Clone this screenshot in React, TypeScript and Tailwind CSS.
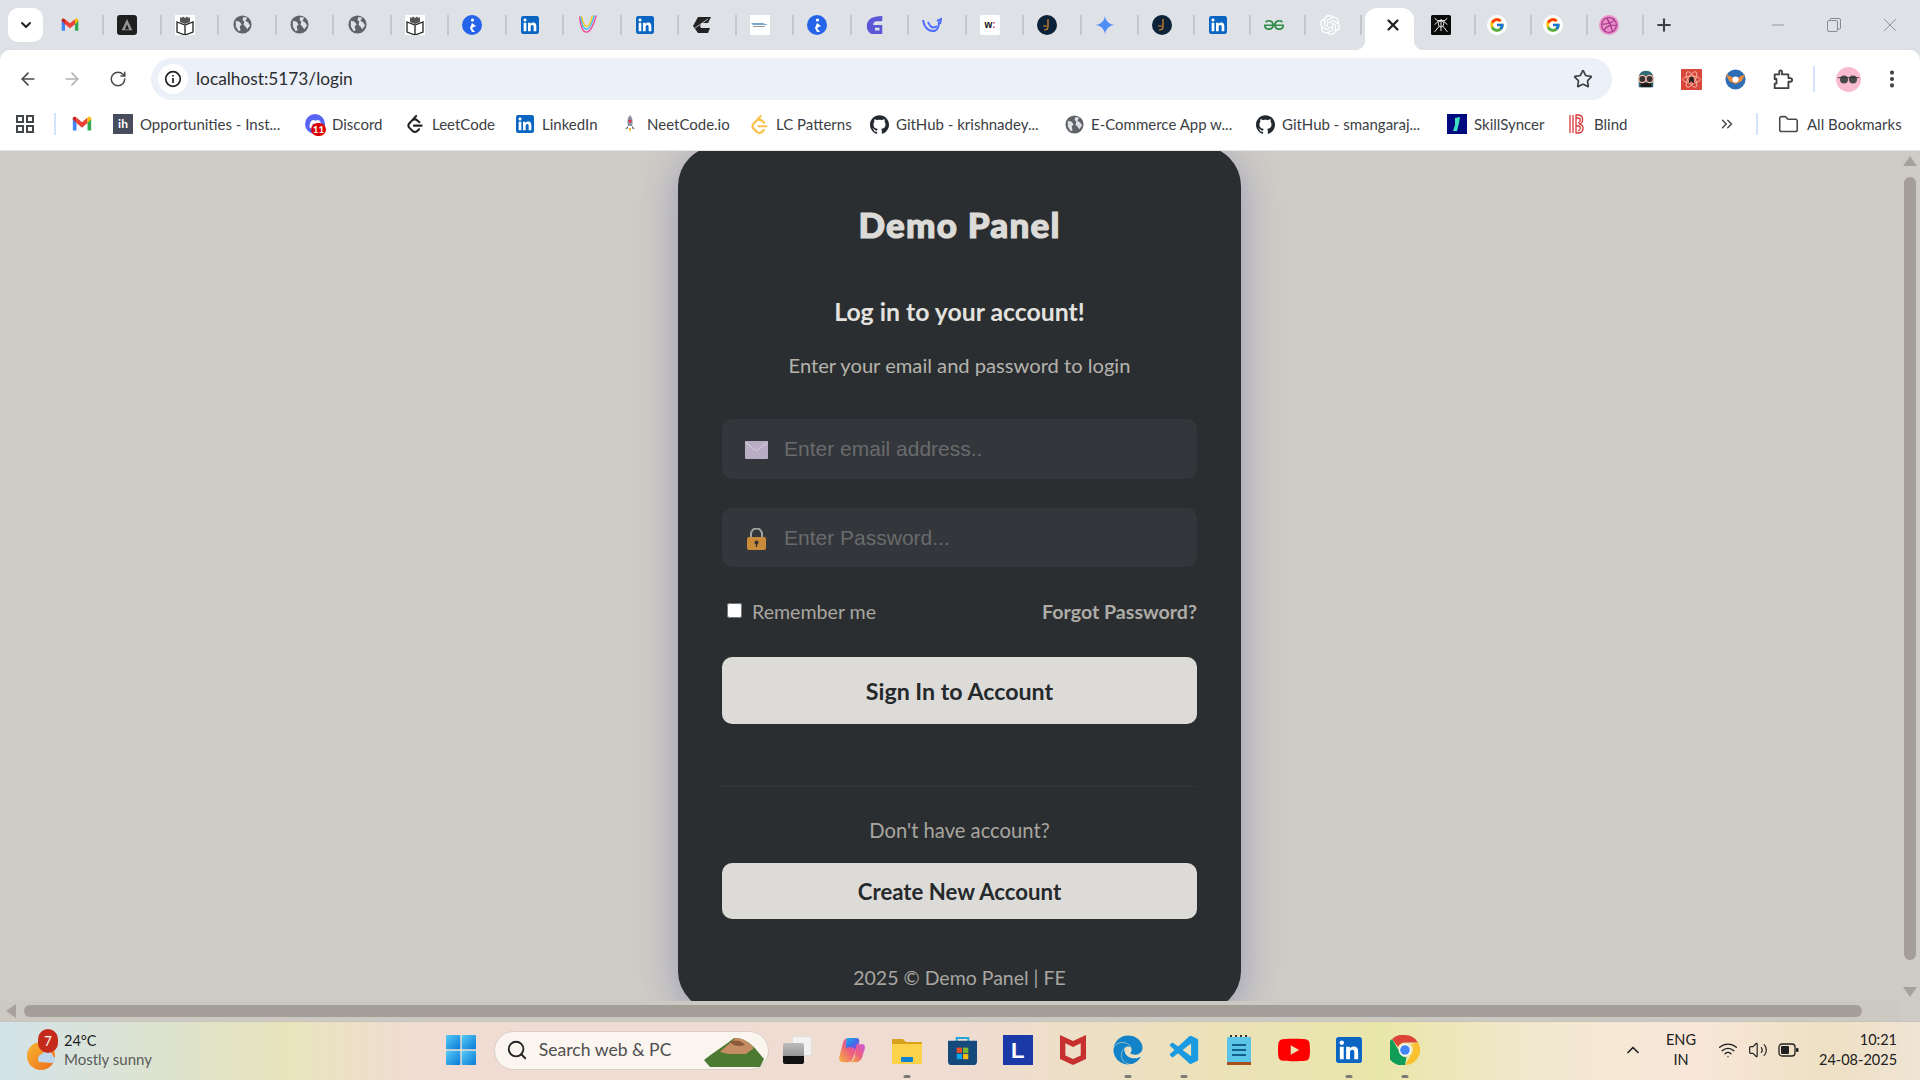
import React from "react";
import { ArrowLeft, ArrowRight, RotateCw, Star, ChevronDown, X, Plus, Minus, ChevronsRight, Folder, EllipsisVertical, Search, ChevronUp, Wifi, Volume2 } from "lucide-react";
import { SiLinkedin, SiOpenai, SiGithub, SiLeetcode, SiGeeksforgeeks, SiGooglegemini, SiMcafee, SiYoutube, SiDribbble } from "react-icons/si";
import { FcGoogle } from "react-icons/fc";
import { BiLogoVisualStudio } from "react-icons/bi";
import { FaEdge, FaDiscord } from "react-icons/fa";

const ui = "font-['Lato','Noto_Sans',sans-serif]";

const Gmail = ({ s = 20 }: { s?: number }) => (
  <svg width={s} height={s} viewBox="0 0 24 24">
    <path d="M2 6v13h4V10z" fill="#4285f4" />
    <path d="M22 6v13h-4V10z" fill="#34a853" />
    <path d="M6 11V5l6 5 6-5v6l-6 5z" fill="#ea4335" />
    <path d="M2 6c0-2 2.500-2.500 4-1v6L2 7z" fill="#c5221f" />
    <path d="M22 6c0-2-2.500-2.500-4-1v6l4-4z" fill="#fbbc04" />
  </svg>
);
const Globe = () => (
  <svg width="19" height="19" viewBox="0 0 20 20">
    <circle cx="10" cy="10" r="9.500" fill="#5f6368" />
    <path d="M3 6l4 1 2 3-2 2 1 4-2 1-3-5zM11 2l4 1-2 3 3 2 2 3-3 4-2-3-2-2 1-3-2-2z" fill="#dee1e6" />
  </svg>
);
const Book = () => (
  <svg width="20" height="20" viewBox="0 0 20 20">
    <rect width="20" height="20" fill="#fff" />
    <path d="M2 7l8 3 8-3v10l-8 3-8-3zM10 10v10" fill="#fff" stroke="#222" strokeWidth="1.300" />
    <path d="M5 7V2l1.500 1L8 1.500 10 3l2-1.500L13.500 3 15 2v5l-5 2z" fill="#555" />
  </svg>
);
const Kite = () => (
  <svg width="20" height="20" viewBox="0 0 20 20">
    <circle cx="10" cy="10" r="10" fill="#2563eb" />
    <circle cx="10.500" cy="5" r="1.600" fill="#fff" />
    <path d="M10 8l4 3-4 2 3 4h-3l-2-4z" fill="#fff" />
  </svg>
);
const Li = ({ s = 18 }: { s?: number }) => <SiLinkedin size={s} color="#0a66c2" className="bg-white rounded-[2px]" />;
const Arc = () => (
  <svg width="21" height="21" viewBox="0 0 22 22" fill="none" strokeWidth="1.500" strokeLinecap="round">
    <path d="M3 3c0 9 3 16 7 16 4 0 8-9 10-17" stroke="#ec4899" />
    <path d="M4 3c1 8 3 13 6 13 3 0 6-7 8-14" stroke="#38bdf8" />
    <path d="M5 3c1 6 3 10 5 10 3 0 5-6 6-11" stroke="#facc15" />
  </svg>
);
const Cummins = () => (
  <svg width="20" height="20" viewBox="0 0 20 20">
    <path d="M6 2h13l-3 6h-6l-2 3 1 2h9l-2 5H6L1 11z" fill="#222" />
    <path d="M3 13L16 4" stroke="#dee1e6" strokeWidth="0.800" />
  </svg>
);
const Thumb = () => (
  <svg width="20" height="20" viewBox="0 0 20 20">
    <rect width="20" height="20" fill="#fff" />
    <path d="M1 8h12l5 2H3z" fill="#7aa6c9" />
    <path d="M3 11h12v1H3z" fill="#999" />
  </svg>
);
const Purple = () => (
  <svg width="20" height="20" viewBox="0 0 20 22">
    <path d="M1 12C1 5 7 1 18 1v6h-6c-3 0-4 2-4 4h10v10H8c-4 0-7-4-7-9z" fill="#5b57d6" />
    <rect x="10" y="14" width="5" height="3" fill="#dee1e6" />
  </svg>
);
const Whale = () => (
  <svg width="20" height="18" viewBox="0 0 20 18" fill="none" stroke="#4d6bfe" strokeWidth="2">
    <path d="M1 4c1 7 5 11 10 11 4 0 6-4 6-9" />
    <path d="M6 6c2 5 5 7 9 4M15 5l4-2-1 5" />
  </svg>
);
const W = () => (
  <div className="w-5 h-5 bg-white rounded-[2px] flex items-center justify-center text-[10px] font-bold font-['Liberation_Sans',sans-serif] text-[#111]">
    w<span className="text-[#e11d48]">:</span>
  </div>
);
const Dark = () => (
  <svg width="20" height="20" viewBox="0 0 20 20">
    <circle cx="10" cy="10" r="10" fill="#0b2239" />
    <path d="M11 4v8c0 2-2 3-4 3M6 11h4" stroke="#e08a2c" strokeWidth="1.200" fill="none" />
  </svg>
);
const Triangle = () => (
  <div className="w-5 h-5 rounded-[3px] bg-[#1f1f1f] flex items-center justify-center">
    <svg width="14" height="14" viewBox="0 0 14 16"><path d="M7 1l6 13H1z" fill="#999" /><path d="M7 7l2.500 6h-5z" fill="#1f1f1f" /></svg>
  </div>
);
const Spider = () => (
  <svg width="20" height="20" viewBox="0 0 22 25" preserveAspectRatio="none">
    <rect width="22" height="25" rx="2" fill="#0a0a0a" />
    <path d="M11 5v15M7 7l8 0M4 4l4 4-4 4M18 4l-4 4 4 4M4 21l5-7M18 21l-5-7" stroke="#fff" strokeWidth="1.100" fill="none" />
    <ellipse cx="11" cy="11" rx="3" ry="4" stroke="#fff" fill="none" />
  </svg>
);
const G = () => (
  <div className="w-5 h-5 bg-white rounded-full flex items-center justify-center"><FcGoogle size={16} /></div>
);
const Drib = () => (
  <div className="w-5 h-5 rounded-full bg-[#e78fc9] flex items-center justify-center"><SiDribbble size={16} color="#a8388a" /></div>
);

const tabs: React.ReactNode[] = [
  <Gmail />, <Triangle />, <Book />, <Globe />, <Globe />, <Globe />, <Book />, <Kite />, <Li />, <Arc />, <Li />, <Cummins />, <Thumb />, <Kite />, <Purple />, <Whale />, <W />, <Dark />,
  <SiGooglegemini size={20} color="#4f8df7" />, <Dark />, <Li />, <SiGeeksforgeeks size={20} color="#2f8d46" />, <SiOpenai size={20} color="#fff" />,
];

const marks: { w: string; icon: React.ReactNode; text: string }[] = [
  { w: "w-[192px]", icon: <div className="w-5 h-5 bg-[#474d5c] text-white text-[12px] leading-5 text-center font-bold">ih</div>, text: "Opportunities - Inst..." },
  {
    w: "w-[100px]",
    icon: (
      <div className="relative w-5 h-5 rounded-full bg-[#5865f2] flex items-center justify-center">
        <FaDiscord size={13} color="#fff" />
        <span className="absolute -bottom-[2px] -right-[1px] w-[15px] h-[13px] rounded-full bg-[#d00] text-white text-[10px] leading-[13px] text-center font-bold">11</span>
      </div>
    ),
    text: "Discord",
  },
  { w: "w-[110px]", icon: <SiLeetcode size={18} color="#222" />, text: "LeetCode" },
  { w: "w-[105px]", icon: <Li />, text: "LinkedIn" },
  {
    w: "w-[129px]",
    icon: (
      <svg width="20" height="20" viewBox="0 0 20 20">
        <path d="M10 1c3 3 3 7 2 11H8C7 8 7 4 10 1z" fill="#8a94a6" />
        <circle cx="10" cy="7" r="1.500" fill="#e23" />
        <path d="M8 12l-3 3 3-.5zM12 12l3 3-3-.5z" fill="#667" />
        <path d="M9 14h2l-1 5z" fill="#f59e0b" />
      </svg>
    ),
    text: "NeetCode.io",
  },
  { w: "w-[120px]", icon: <SiLeetcode size={19} color="#fbc14d" />, text: "LC Patterns" },
  { w: "w-[195px]", icon: <SiGithub size={19} color="#24292f" />, text: "GitHub - krishnadey..." },
  { w: "w-[191px]", icon: <Globe />, text: "E-Commerce App w..." },
  { w: "w-[192px]", icon: <SiGithub size={19} color="#24292f" />, text: "GitHub - smangaraj..." },
  {
    w: "w-[120px]",
    icon: (
      <svg width="20" height="20" viewBox="0 0 20 20">
        <rect width="20" height="20" fill="#000a80" />
        <path d="M8 4l5-1-1 6-2 8H6l2-6z" fill="#3ee0c0" />
      </svg>
    ),
    text: "SkillSyncer",
  },
  {
    w: "w-[110px]",
    icon: (
      <svg width="18" height="20" viewBox="0 0 18 20" fill="none" stroke="#d9383a" strokeWidth="1.300">
        <path d="M2 1v18M5 1v18M8 1h2c6 0 6 8 1 9 6 1 5 9-1 9H8z" />
        <path d="M8 4h2c3 0 3 4 0 5M8 12h2c3 0 3 4 0 5" />
      </svg>
    ),
    text: "Blind",
  },
];

const Sep = () => <div className="w-[2px] h-[20px] bg-[#c4c7c9] shrink-0" />;

function TabBar() {
  return (
    <div className={`h-[50px] bg-[#dee1e6] flex items-center pl-2 ${ui}`}>
      <div className="w-[35px] h-[34px] rounded-[10px] bg-white flex items-center justify-center -mt-[1px] shrink-0"><ChevronDown size={16} strokeWidth={3} color="#202124" /></div>
      <div className="w-[3.800px] shrink-0" />
      {tabs.map((t, i) => (
        <div key={i} className={`${i < 19 ? "w-[57.500px]" : "w-[55.700px]"} flex items-center shrink-0 -mt-[1px]`}>
          <div className="w-[46.400px] shrink-0 flex items-center justify-center">{t}</div>
          <div className="flex-1" />
          <Sep />
        </div>
      ))}
      <div className="relative ml-[3px] w-[49px] h-[42px] self-end bg-white rounded-t-[12px] flex items-center justify-center shrink-0 pb-[8px] pl-[7px]">
        <X size={18} strokeWidth={3} color="#202124" />
        <span className="absolute bottom-0 -left-[10px] w-[10px] h-[10px] bg-[radial-gradient(circle_at_0_0,#dee1e6_10px,#ffffff_10.500px)]" />
        <span className="absolute bottom-0 -right-[10px] w-[10px] h-[10px] bg-[radial-gradient(circle_at_100%_0,#dee1e6_10px,#ffffff_10.500px)]" />
      </div>
      <div className="w-[60px] pr-[6px] flex items-center justify-center shrink-0"><Spider /></div>
      <Sep />
      <div className="w-[54px] pr-[12px] flex items-center justify-center shrink-0"><G /></div>
      <Sep />
      <div className="w-[54px] pr-[12px] flex items-center justify-center shrink-0"><G /></div>
      <Sep />
      <div className="w-[54px] pr-[12px] flex items-center justify-center shrink-0"><Drib /></div>
      <Sep />
      <div className="w-[40px] flex items-center justify-center shrink-0"><Plus size={20} strokeWidth={2.500} color="#3c4043" /></div>
      <div className="flex-1" />
      <div className="flex items-center text-[#8a8c8f] mr-[2px]">
        <div className="w-[56px] flex justify-center"><Minus size={20} strokeWidth={1} /></div>
        <div className="w-[56px] flex justify-center">
          <svg width="16" height="16" viewBox="0 0 16 16" fill="none" stroke="currentColor"><rect x="1.500" y="3.500" width="10" height="11" rx="1.500" /><path d="M4 3V2.500A1 1 0 0 1 5 1.500h8A1.500 1.500 0 0 1 14.500 3v8a1 1 0 0 1-1 1H12" /></svg>
        </div>
        <div className="w-[56px] flex justify-center"><X size={22} strokeWidth={1} /></div>
      </div>
    </div>
  );
}

function Toolbar() {
  return (
    <div className={`h-[58px] bg-white rounded-t-[10px] flex items-center ${ui}`}>
      <div className="w-[54px] flex justify-center pl-[2px] shrink-0"><ArrowLeft size={20} color="#474a4d" strokeWidth={2} /></div>
      <div className="w-[36px] flex justify-center shrink-0"><ArrowRight size={20} color="#b0b2b5" strokeWidth={2} /></div>
      <div className="w-[56px] flex justify-center shrink-0"><RotateCw size={18} color="#474a4d" strokeWidth={2} /></div>
      <div className="ml-[5px] w-[1461px] h-[42px] rounded-full bg-[#ecf0f8] flex items-center pl-[7px] pr-[19px] shrink-0">
        <div className="w-[30px] h-[30px] rounded-full bg-white flex items-center justify-center shrink-0">
          <svg width="18" height="18" viewBox="0 0 18 18" fill="none" stroke="#202124" strokeWidth="1.700"><circle cx="9" cy="9" r="7.300" /><path d="M9 8v5M9 5v1.600" /></svg>
        </div>
        <span className="ml-[8px] text-[17.300px] text-[#2b2d30]">localhost:5173/login</span>
        <div className="flex-1" />
        <Star size={20} color="#3c4043" strokeWidth={2} />
      </div>
      <div className="w-[42px] ml-[13px] flex justify-center shrink-0">
        <svg width="20" height="20" viewBox="0 0 22 22">
          <path d="M3 10c0-5 3-8 8-8s8 3 8 8v10H3z" fill="#2f6b77" />
          <rect x="5" y="15" width="12" height="5" fill="#1a1a1a" />
          <circle cx="7" cy="11" r="4" fill="#333" stroke="#f5b7a5" strokeWidth="1.500" />
          <circle cx="15" cy="11" r="4" fill="#333" stroke="#f5b7a5" strokeWidth="1.500" />
        </svg>
      </div>
      <div className="w-[48px] flex justify-center shrink-0">
        <svg width="21" height="21" viewBox="0 0 24 24">
          <rect width="24" height="24" rx="1" fill="#d9463a" />
          <g fill="none" stroke="#f5c9b8" strokeWidth="0.900"><ellipse cx="12" cy="12" rx="10" ry="4" /><ellipse cx="12" cy="12" rx="10" ry="4" transform="rotate(60 12 12)" /><ellipse cx="12" cy="12" rx="10" ry="4" transform="rotate(120 12 12)" /></g>
          <path d="M10 9h4l1 7h-2l-1-3-2 3H9z" fill="#222" />
        </svg>
      </div>
      <div className="w-[40px] flex justify-center shrink-0">
        <svg width="21" height="21" viewBox="0 0 24 24">
          <circle cx="12" cy="12" r="11.500" fill="#2f6eb5" />
          <path d="M1 6l11 5 11-5-4 8-7 3-7-3z" fill="#ee8c3a" />
          <circle cx="12" cy="12" r="3.500" fill="#fff" />
        </svg>
      </div>
      <div className="w-[54px] flex justify-center shrink-0">
        <svg width="22" height="22" viewBox="0 0 24 24" fill="none" stroke="#3c4043" strokeWidth="2" strokeLinejoin="round"><path d="M4 7h5V4a1.500 1.500 0 0 1 3 0v3h7v4h2a2 2 0 0 1 0 4h-2v7H4v-5h2v-5H4z" /></svg>
      </div>
      <div className="w-[2px] h-[26px] bg-[#d3e3fd] ml-[4px] shrink-0" />
      <div className="w-[66px] flex justify-center shrink-0">
        <svg width="25" height="25" viewBox="0 0 28 28">
          <circle cx="14" cy="14" r="14" fill="#f8bbd0" />
          <circle cx="9" cy="14" r="4.500" fill="#4a4a4a" />
          <circle cx="19" cy="14" r="4.500" fill="#4a4a4a" />
          <path d="M2 12h24" stroke="#333" strokeWidth="1" />
        </svg>
      </div>
      <div className="w-[22px] flex justify-center shrink-0"><EllipsisVertical size={22} color="#3c4043" strokeWidth={2.500} /></div>
    </div>
  );
}

function Bookmarks() {
  return (
    <div className={`h-[43px] pb-[10px] bg-white border-b border-[#e6e6e6] flex items-center text-[15px] text-[#3c4043] ${ui}`}>
      <div className="w-[49px] flex justify-center shrink-0">
        <svg width="18" height="18" viewBox="0 0 18 18" fill="none" stroke="#44474a" strokeWidth="2"><rect x="1" y="1" width="6" height="6" /><rect x="11" y="1" width="6" height="6" /><rect x="1" y="11" width="6" height="6" /><rect x="11" y="11" width="6" height="6" /></svg>
      </div>
      <div className="ml-[5px] w-[2px] h-[22px] bg-[#d3e3fd] shrink-0" />
      <div className="w-[52px] flex justify-center shrink-0"><Gmail s={22} /></div>
      <div className="w-[5px] shrink-0" />
      {marks.map((m) => (
        <div key={m.text} className={`${m.w} shrink-0 flex items-center gap-[7px]`}>
          <div className="w-5 flex justify-center shrink-0">{m.icon}</div>
          <span className="whitespace-nowrap">{m.text}</span>
        </div>
      ))}
      <div className="ml-[41px] shrink-0"><ChevronsRight size={18} color="#474a4d" /></div>
      <div className="w-[2px] h-[22px] bg-[#d3e3fd] ml-[20px] shrink-0" />
      <div className="ml-[20px] shrink-0"><Folder size={21} color="#474a4d" strokeWidth={1.800} /></div>
      <span className="ml-[8px] whitespace-nowrap">All Bookmarks</span>
    </div>
  );
}

function Card() {
  const field = "h-full flex-1 bg-transparent outline-none pl-[62px] text-[21px] font-['Liberation_Sans',sans-serif] placeholder:text-[#696b6d]";
  return (
    <div className={`ml-[678px] -mt-[5px] w-[563px] px-[44px] pt-[58px] pb-[19px] rounded-[40px] bg-[#2b2e31] shadow-[0_8px_40px_rgba(31,38,135,0.3)] flex flex-col ${ui}`}>
      <h1 className="h-[40px] leading-[40px] text-center text-[35px] tracking-[1.200px] font-black text-[#dcdbd7] [-webkit-text-stroke:1.200px_#dcdbd7]">Demo Panel</h1>
      <h2 className="mt-[52px] h-[32px] leading-[32px] text-center text-[24.800px] font-bold text-[#e2e2df]">Log in to your account!</h2>
      <p className="mt-[23px] h-[28px] leading-[28px] text-center text-[20.150px] text-[#b5b3ad]">Enter your email and password to login</p>
      <div className="relative mt-[40px] h-[60px] rounded-[10px] bg-[#33363a] flex items-center">
        <svg className="absolute left-[23px] top-[22px]" width="23" height="18" viewBox="0 0 23 18">
          <rect width="23" height="18" rx="1" fill="#b8adc4" />
          <path d="M0 1l11.500 9L23 1" fill="none" stroke="#d6cfdc" strokeWidth="1" />
        </svg>
        <input className={field} placeholder="Enter email address.." />
      </div>
      <div className="relative mt-[29px] h-[59px] rounded-[10px] bg-[#33363a] flex items-center">
        <svg className="absolute left-[25px] top-[20px]" width="19" height="22" viewBox="0 0 19 22">
          <path d="M4 10V6a5.500 5.500 0 0 1 11 0v4" fill="none" stroke="#a1a1a1" strokeWidth="2" />
          <rect y="9" width="19" height="13" rx="2" fill="#c98a3a" />
          <circle cx="9.500" cy="14.500" r="2" fill="#333" />
          <rect x="8.800" y="15" width="1.400" height="4" fill="#333" />
        </svg>
        <input className={field} placeholder="Enter Password..." />
      </div>
      <div className="mt-[33px] h-[24px] flex items-center">
        <input type="checkbox" className="w-[15px] h-[15px] ml-[5px] -mt-[3px]" />
        <span className="ml-[10px] text-[19.600px] text-[#a8a6a0]">Remember me</span>
        <div className="flex-1" />
        <span className="text-[19.600px] font-bold text-[#aeaca6]">Forgot Password?</span>
      </div>
      <button className="mt-[33px] h-[67px] pt-[2px] rounded-[10px] bg-[#dcdbd7] text-[#26292c] text-[23.200px] font-bold">Sign In to Account</button>
      <div className="mt-[62px] h-px bg-[#35383b]" />
      <p className="mt-[29px] h-[28px] leading-[28px] text-center text-[20.200px] text-[#a8a6a0]">Don't have account?</p>
      <button className="mt-[19px] h-[56px] pt-[2px] rounded-[10px] bg-[#dcdbd7] text-[#26292c] text-[22.200px] font-bold">Create New Account</button>
      <p className="mt-[45px] h-[28px] leading-[28px] text-center text-[19.500px] text-[#a8a6a0]">2025 © Demo Panel | FE</p>
    </div>
  );
}

function Tile({ children, dot }: { children: React.ReactNode; dot?: boolean }) {
  return (
    <div className="relative w-[55.300px] h-[59px] pb-[2px] flex items-center justify-center shrink-0">
      {children}
      {dot && <span className="absolute bottom-[3px] left-1/2 -translate-x-1/2 w-[7px] h-[3px] rounded-full bg-[#7c7a77]" />}
    </div>
  );
}

function Taskbar() {
  return (
    <div className={`h-[59px] shrink-0 border-t border-[#c7c4bd] flex items-center bg-[linear-gradient(90deg,#d3e3e9_0%,#dfe3c9_10%,#e8e4bc_15%,#f0dcd3_22%,#efdcd2_50%,#e9e6a9_72%,#f2e8cf_80%,#f8e7d9_88%,#eee0c4_95%,#f0e4d4_100%)] ${ui}`}>
      <div className="relative w-[433.500px] h-full shrink-0">
        <svg className="absolute left-[27px] top-[14px]" width="30" height="36" viewBox="0 0 30 36">
          <defs><linearGradient id="sun" x1="0" y1="0" x2="1" y2="1"><stop offset="0" stopColor="#f7b733" /><stop offset="1" stopColor="#ef6c1a" /></linearGradient></defs>
          <circle cx="14" cy="20" r="14" fill="url(#sun)" />
          <path d="M12 26a5 5 0 0 1 3-8 6 6 0 0 1 11 2 4 4 0 0 1 0 7z" fill="#bcd6ee" />
        </svg>
        <span className="absolute left-[38px] top-[7px] w-[20px] h-[24px] rounded-full bg-[#c42b1c] text-white text-[13px] leading-[24px] text-center">7</span>
        <span className="absolute left-[64px] top-[8px] text-[14.500px] text-[#1c1c1c]">24°C</span>
        <span className="absolute left-[64px] top-[26px] text-[15px] text-[#5a5a5a] whitespace-nowrap">Mostly sunny</span>
      </div>
      <Tile>
        <svg width="30" height="30" viewBox="0 0 30 30">
          <defs><linearGradient id="win" x1="0" y1="0" x2="1" y2="1"><stop offset="0" stopColor="#55ccf5" /><stop offset="1" stopColor="#0a78d8" /></linearGradient></defs>
          <rect width="14.300" height="14.300" rx="1" fill="url(#win)" /><rect x="15.700" width="14.300" height="14.300" rx="1" fill="url(#win)" /><rect y="15.700" width="14.300" height="14.300" rx="1" fill="url(#win)" /><rect x="15.700" y="15.700" width="14.300" height="14.300" rx="1" fill="url(#win)" />
        </svg>
      </Tile>
      <div className="relative ml-[5px] mb-[2px] w-[275px] h-[39px] rounded-full bg-[#fbf5f0] border border-[#d9cfc7] flex items-center pl-[11px] shrink-0">
        <Search size={22} color="#222" strokeWidth={2} />
        <span className="ml-[11px] text-[17.600px] text-[#4f4f4f]">Search web &amp; PC</span>
        <svg className="absolute right-[2px] top-[2px]" width="64" height="34" viewBox="0 0 64 34">
          <path d="M2 26C12 18 22 12 32 4c8-1 16 5 20 9l10 12-4 8H8z" fill="#4d7a33" />
          <path d="M18 18C24 12 30 8 33 4c8 0 14 4 19 10l-8 6H26z" fill="#c48d63" />
          <path d="M28 8c6-3 12-1 15 3-6 2-12 1-15-3z" fill="#8a5a3a" />
        </svg>
      </div>
      <Tile>
        <div className="relative w-[30px] h-[28px] ml-[4px]">
          <div className="absolute left-[9px] top-0 w-[20px] h-[20px] bg-[#f4f2f0] border border-[#ddd] rounded-[2px]" />
          <div className="absolute left-0 top-[7px] w-[21px] h-[21px] bg-[linear-gradient(180deg,#bbb_0%,#999_60%,#111_62%,#111_100%)] rounded-[2px]" />
        </div>
      </Tile>
      <Tile>
        <svg width="30" height="27" viewBox="0 0 30 30">
          <defs>
            <linearGradient id="cp1" x1="0" y1="0" x2="1" y2="1"><stop offset="0" stopColor="#1db4e8" /><stop offset="0.500" stopColor="#3f6fe8" /><stop offset="1" stopColor="#a83fdc" /></linearGradient>
            <linearGradient id="cp2" x1="0" y1="1" x2="1" y2="0"><stop offset="0" stopColor="#f5b83a" /><stop offset="0.500" stopColor="#ee5f7c" /><stop offset="1" stopColor="#c85ae0" /></linearGradient>
          </defs>
          <path d="M9 2h10c3 0 4 3 3 6l-6 16c-1 3-3 4-6 4H5C2 28 0 26 1 22l4-16C6 3 7 2 9 2z" fill="url(#cp2)" />
          <path d="M9 1h11c2 0 4 2 3 5l-3 8-6-3-6 1z" fill="url(#cp1)" />
          <path d="M20 8h7c2 0 3 3 2 6l-3 9c-1 3-4 5-7 5h-6c3-1 4-3 5-6z" fill="url(#cp2)" />
        </svg>
      </Tile>
      <Tile dot>
        <svg width="30" height="27" viewBox="0 0 30 27">
          <path d="M0 2h11l3 3h16v5H0z" fill="#d9a21b" />
          <path d="M0 7h30v20H0z" fill="#fbd24a" />
          <rect x="9" y="20" width="12" height="5" rx="1" fill="#0f80d0" />
        </svg>
      </Tile>
      <Tile>
        <svg width="29" height="29" viewBox="0 0 30 30">
          <path d="M9 6V2h12v4" fill="none" stroke="#22a7d8" strokeWidth="2" />
          <path d="M0 5h30v21a4 4 0 0 1-4 4H4a4 4 0 0 1-4-4z" fill="#15497c" />
          <rect x="9" y="12" width="5.500" height="5.500" fill="#e8502a" /><rect x="15.500" y="12" width="5.500" height="5.500" fill="#7cb82f" /><rect x="9" y="18.500" width="5.500" height="5.500" fill="#10a3e8" /><rect x="15.500" y="18.500" width="5.500" height="5.500" fill="#fbb90a" />
        </svg>
      </Tile>
      <Tile>
        <div className="w-[30px] h-[30px] bg-[#1b3aa8] flex items-center justify-center text-white text-[22px] font-bold font-['Liberation_Sans',sans-serif]">L</div>
      </Tile>
      <Tile><SiMcafee size={30} color="#c6302f" /></Tile>
      <Tile dot><FaEdge size={30} color="#1383c9" /></Tile>
      <Tile dot><BiLogoVisualStudio size={34} color="#1a9ae0" /></Tile>
      <Tile>
        <svg width="24" height="30" viewBox="0 0 24 30">
          <rect y="2" width="24" height="26" rx="1" fill="#5cc4e6" />
          <rect y="27" width="24" height="3" fill="#a8501c" />
          <path d="M4 2V0M9 2V0M14 2V0M19 2V0" stroke="#333" strokeWidth="2" />
          <path d="M5 10h14M5 15h14M5 20h14" stroke="#14608c" strokeWidth="1.800" />
        </svg>
      </Tile>
      <Tile><SiYoutube size={32} color="#f00" /></Tile>
      <Tile dot><SiLinkedin size={26} color="#0a66c2" className="bg-white rounded-[2px]" /></Tile>
      <Tile dot>
        <svg width="30" height="30" viewBox="0 0 30 30">
          <path d="M15 0a15 15 0 0 1 13 7.500H15A7.500 7.500 0 0 0 8 12L2 4a15 15 0 0 1 13-4z" fill="#db4437" />
          <path d="M28 7.500A15 15 0 0 1 15 30l6.500-11A7.500 7.500 0 0 0 21 9z" fill="#fbc02d" />
          <path d="M15 30A15 15 0 0 1 2 4l6.500 11a7.500 7.500 0 0 0 8 7.300z" fill="#0f9d58" />
          <circle cx="15" cy="15" r="6" fill="#fff" /><circle cx="15" cy="15" r="4.800" fill="#4285f4" />
        </svg>
      </Tile>
      <div className="flex-1 flex items-center justify-end text-[#202020] text-[14.500px] pr-[23px] pb-[2px]">
        <ChevronUp size={20} strokeWidth={2} />
        <div className="ml-[21px] w-[34px] text-center leading-[20px] text-[14.500px]">ENG<br />IN</div>
        <Wifi size={20} className="ml-[20px]" strokeWidth={1.600} />
        <Volume2 size={20} className="ml-[10px]" strokeWidth={1.400} />
        <svg className="ml-[10px]" width="21" height="14" viewBox="0 0 21 14" fill="none"><rect x="1" y="1" width="16" height="12" rx="3" stroke="#202020" strokeWidth="1.300" /><rect x="3" y="3" width="8" height="8" rx="1" fill="#202020" /><rect x="18" y="5" width="2.500" height="4" rx="1" fill="#202020" /></svg>
        <div className="ml-[20px] w-[78px] text-right leading-[20px] whitespace-nowrap">10:21<br />24-08-2025</div>
      </div>
    </div>
  );
}

export default function App() {
  return (
    <div className="w-[1920px] h-[1080px] overflow-hidden flex flex-col bg-[#dee1e6]">
      <TabBar />
      <Toolbar />
      <Bookmarks />
      <div className="flex-1 min-h-0 flex bg-[#cfccc7]">
        <div className="flex-1 min-w-0 flex flex-col">
          <div className="flex-1 min-h-0 overflow-hidden"><Card /></div>
          <div className="h-[20px] shrink-0 bg-[#ccc9c3] flex items-center px-[5px]">
            <svg width="12" height="14" viewBox="0 0 12 14"><path d="M11 0v14L1 7z" fill="#a6a29b" /></svg>
            <div className="ml-[7px] w-[1838px] h-[12px] rounded-full bg-[#a39f98]" />
          </div>
        </div>
        <div className="w-[20px] shrink-0 bg-[#cfccc7] flex flex-col items-center">
          <svg className="mt-[5px]" width="14" height="10" viewBox="0 0 14 10"><path d="M0 10h14L7 0z" fill="#a6a29b" /></svg>
          <div className="mt-[11px] w-[12px] h-[783px] rounded-full bg-[#a39f98]" />
          <svg className="mt-[27px]" width="14" height="10" viewBox="0 0 14 10"><path d="M0 0h14L7 10z" fill="#a6a29b" /></svg>
        </div>
      </div>
      <Taskbar />
    </div>
  );
}
